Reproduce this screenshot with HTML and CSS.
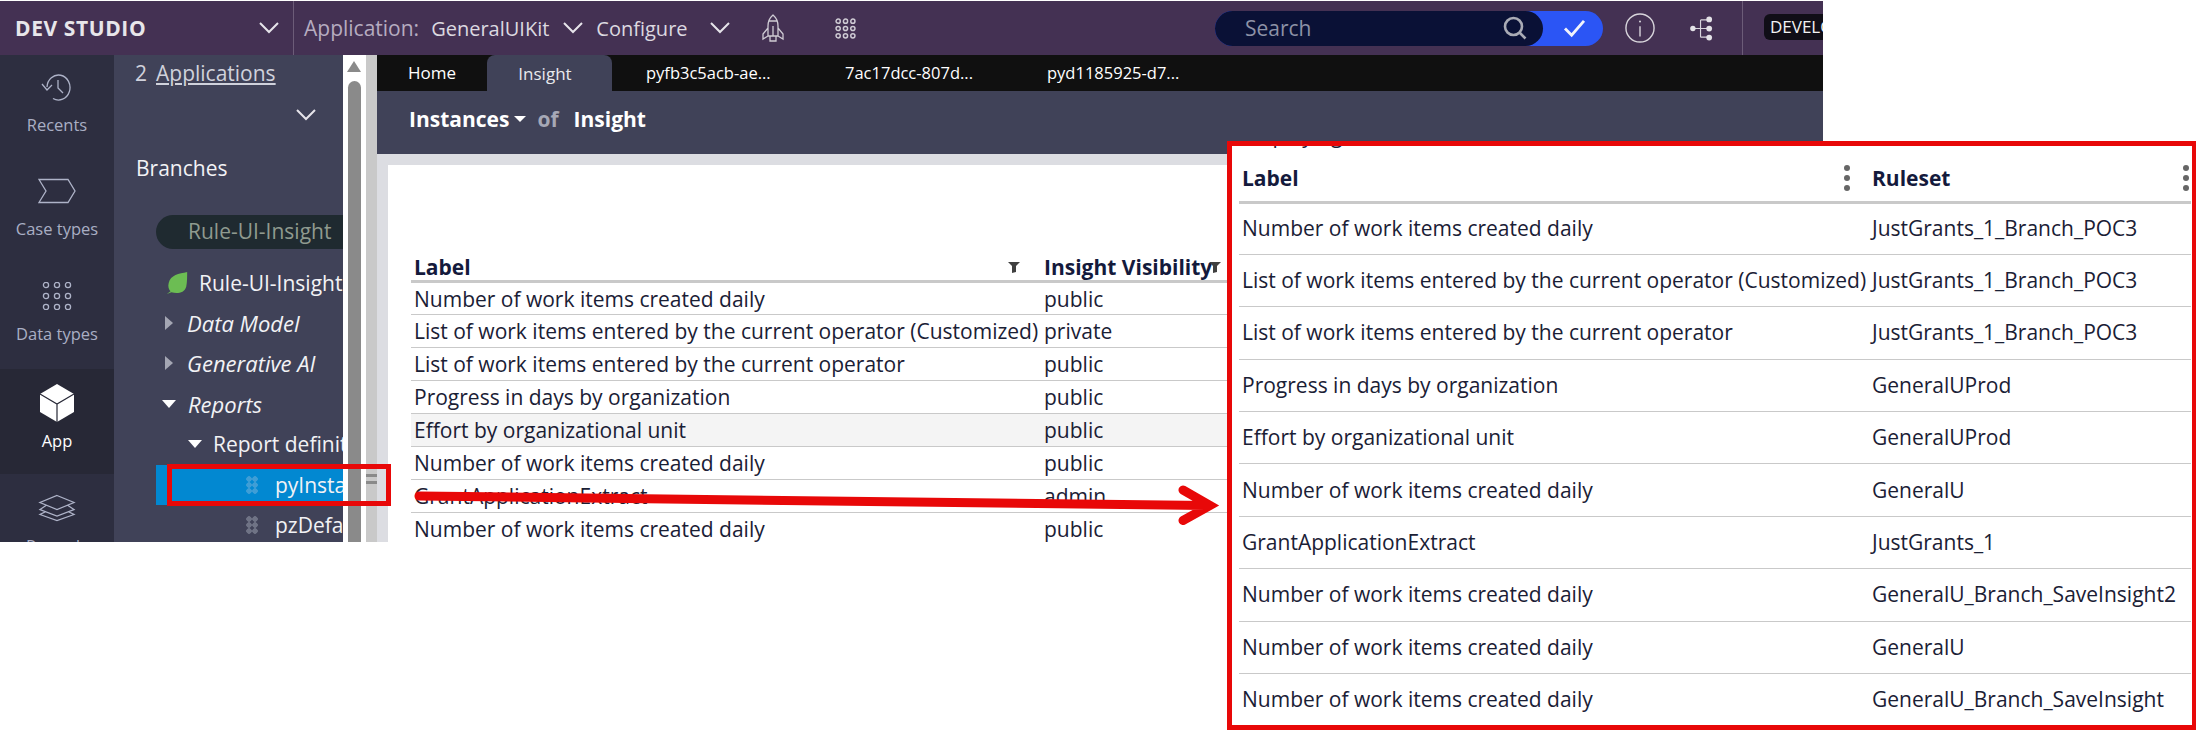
FILE: index.html
```html
<!DOCTYPE html>
<html lang="en">
<head>
<meta charset="utf-8">
<title>Dev Studio</title>
<link rel="stylesheet" href="styles.css">
</head>
<body>
<div class="shot">
  <header class="topbar">
    <div class="brand"><span class="brand-name">DEV STUDIO</span>
      <svg class="chev" viewBox="0 0 20 12"><path d="M1 1l9 9 9-9"/></svg></div>
    <div class="appmenu">
      <span class="app-label">Application:</span><span class="app-name">GeneralUIKit</span>
      <svg class="chev" viewBox="0 0 20 12"><path d="M1 1l9 9 9-9"/></svg>
      <span class="app-name conf">Configure</span>
      <svg class="chev" viewBox="0 0 20 12"><path d="M1 1l9 9 9-9"/></svg>
      <svg class="rocket" viewBox="0 0 22 28"><path d="M11 1C7.500 4 6 8 6 12v10h10V12c0-4-1.500-8-5-11zM6.500 7h9M6 14l-5 6v5l5-3M16 14l5 6v5l-5-3M11 12v10M8 22v5h6v-5"/></svg>
      <svg class="dots9" viewBox="0 0 20 20"><g><circle cx="3" cy="3" r="2"/><circle cx="10" cy="3" r="2"/><circle cx="17" cy="3" r="2"/><circle cx="3" cy="10" r="2"/><circle cx="10" cy="10" r="2"/><circle cx="17" cy="10" r="2"/><circle cx="3" cy="17" r="2"/><circle cx="10" cy="17" r="2"/><circle cx="17" cy="17" r="2"/></g></svg>
    </div>
    <div class="tools">
      <div class="search">
        <div class="search-field"><span>Search</span>
          <svg class="mag" viewBox="0 0 24 24"><circle cx="10.500" cy="10.500" r="8.500"/><path d="M16.500 16.500l6 6"/></svg></div>
        <svg class="check" viewBox="0 0 24 20"><path d="M2 10l7 7L22 2"/></svg>
      </div>
      <svg class="info" viewBox="0 0 32 32"><circle cx="16" cy="16" r="15"/><path d="M16 14v11"/><circle class="solid" cx="16" cy="9" r="1"/></svg>
      <svg class="tree" viewBox="0 0 24 26"><path d="M2 13h9M11 4v18M11 4h8M11 13h8M11 22h8"/><circle class="solid" cx="3" cy="13" r="2.800"/><circle class="solid" cx="20" cy="3.500" r="3"/><circle class="solid" cx="20" cy="13" r="3"/><circle class="solid" cx="20" cy="22.500" r="3"/></svg>
      <div class="env"><span class="env-tag">DEVELOPMENT</span></div>
    </div>
  </header>
  <div class="body">
    <nav class="rail">
      <a class="rail-item first"><svg class="rail-ico" viewBox="0 0 32 28"><path d="M6 14a11.500 12.500 0 1 1 6 11.500M1 11l5 6 5-5M17 7v8l5 5"/></svg><span>Recents</span></a>
      <a class="rail-item"><svg class="rail-ico" viewBox="0 0 38 25"><path d="M1 1h29l7 11.500-7 11.500H1l7-11.500z"/></svg><span>Case types</span></a>
      <a class="rail-item"><svg class="rail-ico" viewBox="0 0 30 28"><circle cx="4" cy="3" r="2.600"/><circle cx="15" cy="3" r="2.600"/><circle cx="26" cy="3" r="2.600"/><circle cx="4" cy="14" r="2.600"/><circle cx="15" cy="14" r="2.600"/><circle cx="26" cy="14" r="2.600"/><circle cx="4" cy="25" r="2.600"/><circle cx="15" cy="25" r="2.600"/><circle cx="26" cy="25" r="2.600"/></svg><span>Data types</span></a>
      <a class="rail-item active"><svg class="rail-ico cube" viewBox="0 0 36 40"><path class="solid" d="M18 1l17 10v18L18 39 1 29V11z"/><path class="cut" d="M1 11l17 10 17-10M18 21v18"/></svg><span>App</span></a>
      <a class="rail-item last"><svg class="rail-ico" viewBox="0 0 38 27"><path d="M19 1l17 7-17 7L2 8zM8 11l-6 4 17 6.500L36 15l-6-4M8 17l-6 3 17 6 17-6-6-3"/></svg><span>Records</span></a>
    </nav>
    <aside class="panel">
      <div class="apps"><span>2</span><a class="apps-link">Applications</a></div>
      <div class="panel-chev"><svg class="chev" viewBox="0 0 20 12"><path d="M1 1l9 9 9-9"/></svg></div>
      <div class="branches">Branches</div>
      <div class="pill">Rule-UI-Insight</div>
      <div class="tree-row leaf-row"><svg class="leaf" viewBox="0 0 24 26"><path d="M23 1C14 3 5 4 3 13c-1 4 0 7 2 9l-4 3 5-2c6 2 14 1 16-6 1-5 1-11 1-16z"/></svg>Rule-UI-Insight</div>
      <div class="tree-row ital"><i class="tri right"></i>Data Model</div>
      <div class="tree-row ital"><i class="tri right"></i>Generative AI</div>
      <div class="tree-row ital"><i class="tri down"></i>Reports</div>
      <div class="tree-row lvl2"><i class="tri down"></i>Report definition</div>
      <div class="tree-row leafitem selected"><i class="grip"></i>pyInstances</div>
      <div class="tree-row leafitem"><i class="grip"></i>pzDefault</div>
    </aside>
    <div class="vscroll"><i class="up"></i><i class="thumb"></i></div>
    <div class="splitter"><i class="handle"></i></div>
    <main class="work">
      <div class="tabs">
        <a class="tab">Home</a><a class="tab current">Insight</a><a class="tab file">pyfb3c5acb-ae...</a><a class="tab file">7ac17dcc-807d...</a><a class="tab file">pyd1185925-d7...</a>
      </div>
      <div class="title"><b>Instances</b><i class="caret"></i><span class="of">of</span><b>Insight</b></div>
      <div class="canvas">
        <div class="sheet">
          <table class="grid">
            <thead><tr><th class="c1">Label<svg class="funnel" viewBox="0 0 12 11" preserveAspectRatio="none"><path d="M0 0h12L8 4v6l-4 1V4z"/></svg></th><th class="c2">Insight Visibility<svg class="funnel f2" viewBox="0 0 12 11" preserveAspectRatio="none"><path d="M0 0h12L8 4v6l-4 1V4z"/></svg></th></tr></thead>
            <tbody>
              <tr><td>Number of work items created daily</td><td>public</td></tr>
              <tr><td>List of work items entered by the current operator (Customized)</td><td>private</td></tr>
              <tr><td>List of work items entered by the current operator</td><td>public</td></tr>
              <tr><td>Progress in days by organization</td><td>public</td></tr>
              <tr class="hover"><td>Effort by organizational unit</td><td>public</td></tr>
              <tr><td>Number of work items created daily</td><td>public</td></tr>
              <tr><td>GrantApplicationExtract</td><td>admin</td></tr>
              <tr><td>Number of work items created daily</td><td>public</td></tr>
            </tbody>
          </table>
        </div>
      </div>
    </main>
  </div>
  <section class="inset">
    <div class="clipped">Displaying</div>
    <table class="igrid">
      <thead><tr><th class="i1">Label<span class="kebab"></span></th><th class="i2">Ruleset<span class="kebab"></span></th></tr></thead>
      <tbody>
        <tr><td>Number of work items created daily</td><td>JustGrants_1_Branch_POC3</td></tr>
        <tr><td>List of work items entered by the current operator (Customized)</td><td>JustGrants_1_Branch_POC3</td></tr>
        <tr><td>List of work items entered by the current operator</td><td>JustGrants_1_Branch_POC3</td></tr>
        <tr><td>Progress in days by organization</td><td>GeneralUProd</td></tr>
        <tr><td>Effort by organizational unit</td><td>GeneralUProd</td></tr>
        <tr><td>Number of work items created daily</td><td>GeneralU</td></tr>
        <tr><td>GrantApplicationExtract</td><td>JustGrants_1</td></tr>
        <tr><td>Number of work items created daily</td><td>GeneralU_Branch_SaveInsight2</td></tr>
        <tr><td>Number of work items created daily</td><td>GeneralU</td></tr>
        <tr><td>Number of work items created daily</td><td>GeneralU_Branch_SaveInsight</td></tr>
      </tbody>
    </table>
  </section>
  <div class="markbox"></div>
  <svg class="arrow" viewBox="0 0 2196 735"><path d="M419 496L1206 505.500M1183 490l27 15.500-27 15"/></svg>
</div>
</body>
</html>
```
FILE: styles.css
```css
* { box-sizing: border-box; }
html, body { margin: 0; padding: 0; background: #fff; }
body { font-family: "Open Sans", "Noto Sans", sans-serif; }
.shot { position: relative; width: 2196px; height: 735px; overflow: hidden; }
svg { display: block; flex: none; }
.chev { width: 20px; height: 12px; fill: none; stroke: #e6e4ea; stroke-width: 2; }

.topbar { width: 1823px; height: 54px; margin-top: 1px; background: #443153; display: flex; color: #dcd9e0; }
.brand { width: 294px; display: flex; align-items: center; justify-content: space-between; padding: 0 14px 0 15px; border-right: 1px solid #6c5c78; flex: none; }
.brand-name { font-weight: 700; font-size: 21px; letter-spacing: .6px; color: #e8e6ea; }
.appmenu { display: flex; align-items: center; padding-left: 10px; font-size: 20px; }
.app-label { color: #b6acc0; margin-right: 12px; font-size: 21px; }
.app-name { color: #dcd9e0; margin-right: 14px; }
.conf { margin: 0 22px 0 13px; }
.rocket { width: 22px; height: 28px; margin-left: 32px; fill: none; stroke: #cfcbd4; stroke-width: 1.300; }
.dots9 { width: 21px; height: 21px; margin-left: 51px; fill: none; stroke: #cfcbd4; stroke-width: 1.400; }
.tools { margin-left: auto; display: flex; align-items: center; }
.search { width: 388px; height: 35px; border-radius: 18px; background: #2b55f5; display: flex; align-items: center; margin-right: 22px; }
.search-field { width: 328px; height: 35px; border-radius: 18px; background: #0a1136; display: flex; align-items: center; justify-content: space-between; padding: 0 16px 0 30px; font-size: 21px; color: #8d92a6; }
.mag { width: 24px; height: 24px; fill: none; stroke: #a9abb5; stroke-width: 2.600; }
.check { width: 23px; height: 19px; margin-left: 20px; fill: none; stroke: #f1f3fb; stroke-width: 3; }
.info { width: 30px; height: 30px; fill: none; stroke: #d8d5dc; stroke-width: 1.500; margin-right: 35px; }
.tree { width: 23px; height: 25px; margin-right: 29px; fill: none; stroke: #d8d5dc; stroke-width: 1.200; }
.solid { fill: #e4e2e7; stroke: none; }
.env { width: 81px; height: 54px; border-left: 1px solid #6c5c78; overflow: hidden; padding: 13px 0 0 21px; }
.env-tag { display: block; height: 26px; width: 150px; background: #100e17; border-radius: 6px; color: #f2f2f2; font-size: 17px; line-height: 26px; padding-left: 6px; white-space: nowrap; }

.body { display: flex; width: 1823px; height: 487px; overflow: hidden; background: #fff; }
.rail { width: 114px; background: #2d2e40; flex: none; }
.rail-item { height: 105px; display: flex; flex-direction: column; align-items: center; color: #a9aec4; font-size: 16.500px; padding-top: 18px; }
.rail-item.first { height: 104px; }
.rail-item.last { padding-top: 20px; }
.rail-ico { width: 38px; height: 28px; margin-bottom: 12px; fill: none; stroke: #aeb3c8; stroke-width: 1.300; }
.rail-item.active { background: #272836; color: #fff; }
.rail-item.active .cube { height: 40px; margin: -4px 0 6px; stroke: none; }
.cube .solid { fill: #fff; }
.cube .cut { fill: none; stroke: #272836; stroke-width: 1.200; }

.panel { width: 229px; flex: none; background: #404258; color: #f2f2f5; font-size: 21px; padding-top: 4px; overflow: hidden; white-space: nowrap; }
.apps { padding-left: 21px; height: 28px; color: #d0d2dc; line-height: 28px; }
.apps-link { margin-left: 9px; text-decoration: underline; }
.panel-chev { padding: 22px 0 0 182px; height: 46px; }
.branches { margin: 19px 0 0 22px; height: 32px; line-height: 32px; }
.pill { margin: 31px 0 0 42px; width: 240px; height: 34px; border-radius: 17px; background: #1f2a30; color: #8f9a8f; line-height: 33px; padding-left: 32px; }
.tree-row { height: 40.500px; line-height: 40px; display: flex; align-items: center; }
.leaf-row { margin-top: 16px; padding-left: 51px; height: 36px; margin-bottom: 1.500px; }
.leaf { width: 24px; height: 24px; margin: 0 10px 0 0; fill: #6cbd53; }
.ital { font-style: italic; padding-left: 50px; font-size: 22px; }
.tri { flex: none; width: 0; height: 0; margin-right: 15px; }
.tri.right { border-left: 8px solid #a4a6b3; border-top: 7px solid transparent; border-bottom: 7px solid transparent; margin-left: 1px; margin-right: 14px; }
.tri.down { border-top: 8px solid #fff; border-left: 7px solid transparent; border-right: 7px solid transparent; margin-left: -2px; margin-right: 12px; }
.lvl2 { padding-left: 76px; }
.lvl2 .tri { margin-right: 11px; }
.leafitem { padding-left: 119px; height: 40.500px; margin-left: 42px; }
.selected { background: #0288d1; height: 40px; }
.grip { flex: none; width: 12px; height: 18px; margin: 0 17px 0 -29px; background: radial-gradient(circle, #6f7385 0 2.500px, transparent 3px) 0 0 / 6px 6px; }
.selected .grip { background-image: radial-gradient(circle, #3f9ed6 0 2.500px, transparent 3px); }
.vscroll { width: 23px; flex: none; background: #fff; position: relative; }
.up { position: absolute; left: 4px; top: 6px; width: 0; height: 0; border-bottom: 11px solid #8a8a8a; border-left: 7px solid transparent; border-right: 7px solid transparent; }
.thumb { position: absolute; left: 5px; top: 26px; width: 13px; height: 500px; background: #8a8a8a; border-radius: 7px 7px 0 0; }
.splitter { width: 11px; flex: none; background: #c9c9c9; position: relative; }
.handle { position: absolute; left: 0; top: 419px; width: 11px; height: 10px; border-top: 3px solid #8a8a8a; border-bottom: 3px solid #8a8a8a; }

.work { flex: 1; min-width: 0; display: flex; flex-direction: column; }
.tabs { height: 36px; background: #101010; display: flex; color: #fff; font-size: 17px; flex: none; }
.tab { width: 110px; line-height: 36px; text-align: center; white-space: nowrap; }
.tab.file { width: 199px; text-align: left; padding-left: 34px; font-size: 16.500px; }
.tab.file:last-child { width: 240px; padding-left: 37px; }
.tab.current { width: 125px; background: #404258; border-radius: 8px 8px 0 0; color: #e9e9ee; padding-right: 9px; line-height: 38px; }
.title { height: 63px; background: #404258; flex: none; display: flex; align-items: center; padding: 0 0 8px 32px; font-size: 21px; color: #fff; }
.caret { width: 0; height: 0; border-top: 6px solid #fff; border-left: 6px solid transparent; border-right: 6px solid transparent; margin-left: 5px; }
.of { color: #a6a8b6; font-weight: 700; margin: 0 15px 0 11px; }
.canvas { flex: 1; background: #dcdde2; padding: 11px 0 0 11px; }
.sheet { background: #fff; height: 500px; padding: 89px 0 0 23px; }

.grid { border-collapse: collapse; table-layout: fixed; width: 1412px; color: #141a3c; font-size: 21px; }
.grid th { text-align: left; font-weight: 700; height: 27px; line-height: 26px; padding: 0 0 0 3px; border-bottom: 3px solid #c9c9c9; position: relative; }
.grid td { height: 33px; line-height: 28px; padding: 0 0 0 3px; border-bottom: 1px solid #c9c9c9; white-space: nowrap; color: #1a2035; }
.c1 { width: 630px; }
.funnel { position: absolute; width: 12px; height: 11px; left: 597px; top: 8px; fill: #404040; }
.f2 { left: 168px; }
.grid .hover td { background: #f4f4f4; }

.inset { position: absolute; left: 1227px; top: 141px; width: 969px; height: 589px; background: #fff; border: 5px solid #e80808; border-right-width: 4px; overflow: hidden; padding: 0 0 0 7px; }
.clipped { position: absolute; left: 10px; top: -25px; font-size: 21px; color: #1a2035; white-space: nowrap; }
.igrid { border-collapse: collapse; table-layout: fixed; width: 952px; color: #141a3c; font-size: 21px; margin-top: 3px; }
.igrid th { text-align: left; font-weight: 700; height: 53px; padding: 6px 0 0 3px; border-bottom: 3px solid #c9c9c9; position: relative; }
.igrid td { height: 52.400px; line-height: 28px; padding: 0 0 1px 3px; border-bottom: 1px solid #c9c9c9; white-space: nowrap; color: #1a2035; }
.igrid tr:last-child td { border-bottom: 0; }
.i1 { width: 630px; }
.kebab { position: absolute; right: 19px; top: 16px; width: 6px; height: 6px; border-radius: 50%; background: #666; box-shadow: 0 10px 0 #666, 0 20px 0 #666; }
.i2 .kebab { right: 2px; }

.markbox { position: absolute; left: 167px; top: 464px; width: 224px; height: 42px; border: 5px solid #e80808; }
.arrow { position: absolute; inset: 0; width: 2196px; height: 735px; fill: none; stroke: #e80808; stroke-width: 9; stroke-linecap: round; pointer-events: none; }
```
